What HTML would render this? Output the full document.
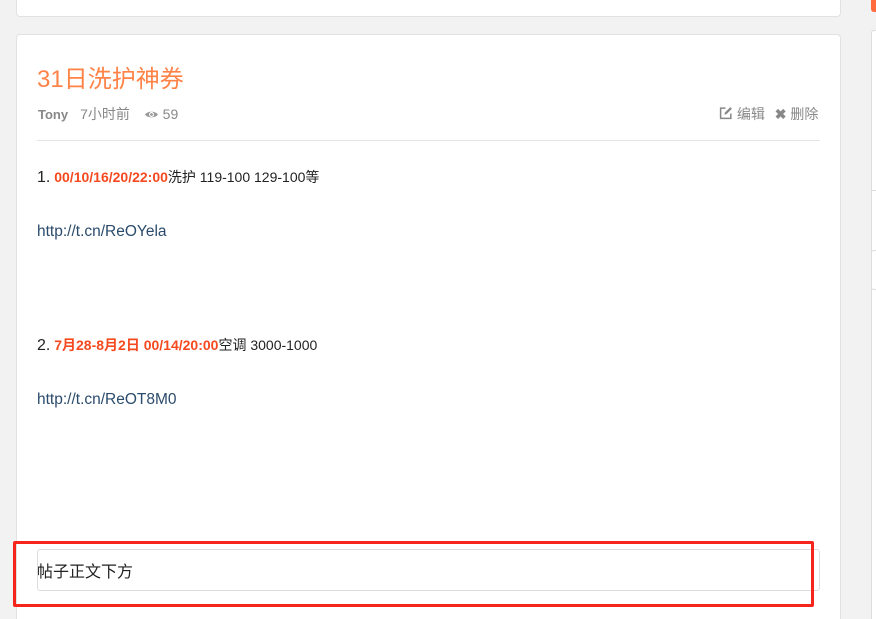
<!DOCTYPE html>
<html style="width:876px;height:619px;overflow:hidden"><head><meta charset="utf-8"><style>
*{margin:0;padding:0;box-sizing:border-box}
body{width:876px;height:619px;background:#f2f2f2;position:relative;overflow:hidden;font-family:"Liberation Sans","Noto Sans CJK SC",sans-serif}
.card{position:absolute;background:#fff;border:1px solid #e2e2e2;border-radius:4px}
.abs{position:absolute;white-space:nowrap}
.red{color:#f5491f;font-weight:bold;font-size:14px}
</style></head><body>
<div class="card" style="left:16px;top:0;width:825px;height:17px;border-top:none;border-radius:0 0 4px 4px"></div>
<div class="card" style="left:16px;top:34px;width:825px;height:585px;border-bottom:none;border-radius:4px 4px 0 0"></div>
<div class="abs" style="left:37px;top:59px;font-size:24px;color:#ff8347">31日洗护神券</div>
<div class="abs" style="left:38px;top:104px;font-size:14px;color:#888"><b style="color:#888;font-size:13px">Tony</b><span style="margin-left:12px">7小时前</span>
<span style="margin-left:10px"><svg width="15" height="11" viewBox="0 0 14 10" style="vertical-align:-1px"><path d="M1 5C3 1.5 11 1.5 13 5C11 8.5 3 8.5 1 5Z" fill="#999"/><circle cx="7" cy="5" r="2.3" fill="#fff"/><circle cx="7" cy="5" r="1.3" fill="#999"/></svg> 59</span></div>
<div class="abs" style="left:719px;top:104px;font-size:14px;color:#888"><svg width="14" height="14" viewBox="0 0 13 13" style="vertical-align:-1px"><path d="M6 2H1.5V11.5H11V7" fill="none" stroke="#888" stroke-width="1.4"/><path d="M5 8L5.5 6L10.5 1L12 2.5L7 7.5Z" fill="#888"/></svg> 编辑 <span style="margin-left:6px;font-weight:bold">✖</span> 删除</div>
<div class="abs" style="left:37px;top:140px;width:783px;height:1px;background:#e5e5e5"></div>
<div class="abs" style="left:37px;top:167px;font-size:14px;color:#222"><span style="font-size:16px">1.</span> <span class="red">00/10/16/20/22:00</span>洗护 119-100 129-100等</div>
<div class="abs" style="left:37px;top:223px;font-size:15.5px;color:#2a4b6b">http://t.cn/ReOYela</div>
<div class="abs" style="left:37px;top:335px;font-size:14px;color:#222"><span style="font-size:16px">2.</span> <span class="red">7月28-8月2日 00/14/20:00</span>空调 3000-1000</div>
<div class="abs" style="left:37px;top:391px;font-size:15.5px;color:#2a4b6b">http://t.cn/ReOT8M0</div>
<div class="abs" style="left:37px;top:549px;width:783px;height:42px;border:1px solid #ddd;border-radius:3px"></div>
<div class="abs" style="left:37px;top:558px;font-size:16px;color:#222">帖子正文下方</div>
<div class="abs" style="left:13px;top:541px;width:801px;height:66px;border:3px solid #f5251c;border-radius:2px"></div>
<div class="abs" style="left:871px;top:0;width:5px;height:12px;background:#ff6b3d;border-radius:0 0 0 3px"></div>
<div class="abs" style="left:871px;top:30px;width:5px;height:589px;background:#fff;border-left:1px solid #ddd;border-top:1px solid #ddd;border-radius:3px 0 0 0"></div>
<div class="abs" style="left:871px;top:190px;width:5px;height:1px;background:#ddd"></div>
<div class="abs" style="left:871px;top:250px;width:5px;height:40px;border:1px solid #ddd;border-right:none;border-radius:3px 0 0 3px;background:#fff"></div>
</body></html>
